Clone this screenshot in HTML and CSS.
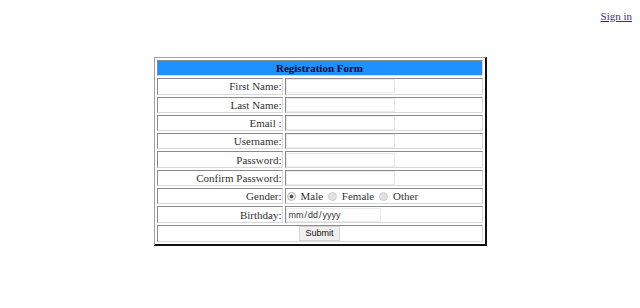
FILE: index.html
```html
<!DOCTYPE html>
<html lang="en">
<head>
<meta charset="UTF-8">
<meta name="viewport" content="width=device-width, initial-scale=1.0">
<title>Registration</title>
<link rel="stylesheet" href="styles.css">
</head>
<body>

<div class="top-bar">
  <a class="sign-in" href="#">Sign in</a>
</div>

<form class="reg-form" onsubmit="return false;">
  <table class="reg-table">
    <tr>
      <th class="form-title" colspan="2">Registration Form</th>
    </tr>
    <tr>
      <td class="label">First Name:</td>
      <td class="field"><input type="text" name="first"></td>
    </tr>
    <tr>
      <td class="label">Last Name:</td>
      <td class="field"><input type="text" name="last"></td>
    </tr>
    <tr>
      <td class="label">Email :</td>
      <td class="field"><input type="email" name="email"></td>
    </tr>
    <tr>
      <td class="label">Username:</td>
      <td class="field"><input type="text" name="user"></td>
    </tr>
    <tr>
      <td class="label">Password:</td>
      <td class="field"><input type="password" name="pass"></td>
    </tr>
    <tr>
      <td class="label">Confirm Password:</td>
      <td class="field"><input type="password" name="pass2"></td>
    </tr>
    <tr>
      <td class="label">Gender:</td>
      <td class="field gender"><input type="radio" name="gender" value="male" checked><span>Male</span> <input type="radio" name="gender" value="female"><span>Female</span> <input type="radio" name="gender" value="other"><span>Other</span></td>
    </tr>
    <tr>
      <td class="label">Birthday:</td>
      <td class="field"><input class="date-input" type="date" name="birthday"></td>
    </tr>
    <tr>
      <td class="submit-cell" colspan="2"><button type="submit" class="submit-btn">Submit</button></td>
    </tr>
  </table>
</form>

</body>
</html>
```

FILE: styles.css
```css
body {
  font-family: "Liberation Serif", "Times New Roman", serif;
  font-size: 11px;
  color: #000;
  background-color: #fff;
  margin: 8px;
}

.top-bar {
  text-align: right;
  padding-top: 2px;
}

.sign-in {
  color: #551a8b;
}

.reg-form {
  margin: 0;
}

.reg-table {
  margin: 35px auto 0;
  width: 333px;
  border-style: solid;
  border-width: 1px 2px 2px 1px;
  border-color: #a0a0a0 #111 #111 #a0a0a0;
  border-spacing: 2px;
}

.reg-table th,
.reg-table td {
  height: 14.3px;
  padding: 0;
  border: 1px solid;
  border-color: #8a8a8a #d8d8d8 #d8d8d8 #8a8a8a;
  vertical-align: middle;
  line-height: 12px;
}

.form-title {
  background-color: #1e90ff;
  font-weight: bold;
  text-align: center;
  color: #0a0a28;
}

.label {
  width: 124px;
  text-align: right;
  color: #333;
}

.field input[type="text"],
.field input[type="email"],
.field input[type="password"] {
  display: block;
  box-sizing: border-box;
  width: 109px;
  height: 14px;
  margin: 0;
  padding: 0 2px;
  border: 1px solid #ececec;
  border-right-color: #e4e4e4;
  background-color: #fff;
}

.gender {
  color: #333;
}

.gender input[type="radio"] {
  appearance: none;
  box-sizing: border-box;
  width: 9px;
  height: 9px;
  margin: 0 5px 0 2px;
  vertical-align: -1px;
  border: 1px solid #cfcfcf;
  border-radius: 50%;
  background-color: #e2e2e2;
}

.gender input[type="radio"]:first-child {
  margin-left: 1px;
}

.gender input[type="radio"]:checked {
  background: radial-gradient(circle, #555 0, #555 1.6px, #e8e8e8 2.2px);
  border-color: #b8b8b8;
}

.date-input {
  display: block;
  box-sizing: border-box;
  width: 95px;
  height: 14px;
  margin: 0;
  padding: 0 1px;
  border: 1px solid #ececec;
  font-family: "Liberation Sans", Arial, sans-serif;
  font-size: 9px;
  color: #333;
}

.date-input::-webkit-calendar-picker-indicator {
  display: none;
}

.submit-cell {
  text-align: center;
}

.submit-btn {
  font-family: "Liberation Sans", Arial, sans-serif;
  font-size: 9px;
  height: 15px;
  padding: 0 5px;
  margin: 0;
  border: 1px solid #d6d6d6;
  background-color: #efefef;
  color: #111;
  vertical-align: middle;
}
```
